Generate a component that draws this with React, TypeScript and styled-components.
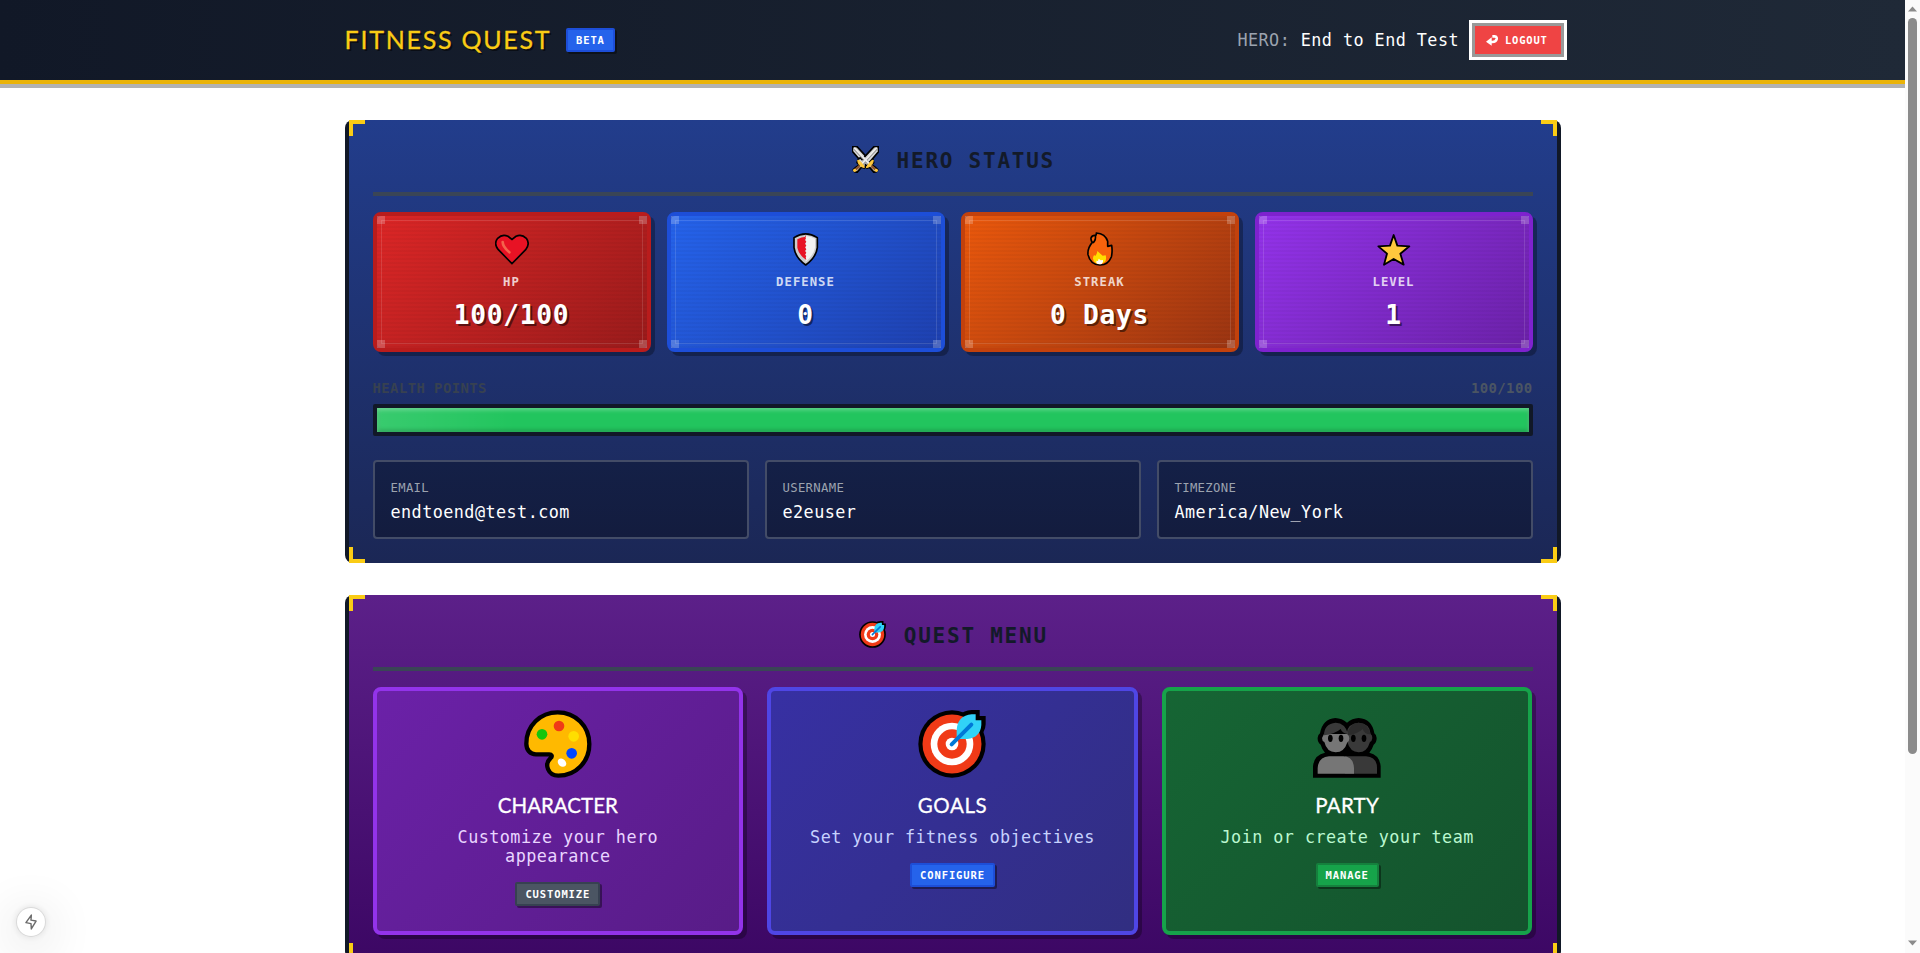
import React from "react";
import styled, { createGlobalStyle, css } from "styled-components";

const GlobalStyle = createGlobalStyle`
  *, *::before, *::after { box-sizing: border-box; }
  body { margin: 0; background: #fff; overflow: hidden; }
  h1, h2, h3, p { margin: 0; }
`;

/* Monospace type with a 0.55em advance and optional tracking. */
const mono = (size: number, tracking = 0) => css`
  font-family: "DejaVu Sans Mono", "Liberation Mono", monospace;
  font-size: ${size * 0.875}px;
  letter-spacing: ${size * 0.0232 + tracking}px;
`;

const Viewport = styled.div`
  display: flex;
  height: 953px;
  overflow: hidden;
`;

const Page = styled.div`
  flex: 1;
  height: 953px;
  overflow: hidden;
`;

const Container = styled.div`
  width: 1216px;
  margin: 0 auto;
`;

const Header = styled.header`
  height: 84px;
  border-bottom: 4px solid #eab308;
  background: linear-gradient(to right, #111827, #1f2937);
  box-shadow: 0 4px 0 rgba(0, 0, 0, 0.3);
`;

const HeaderRow = styled(Container)`
  display: flex;
  align-items: center;
  justify-content: space-between;
  height: 80px;
`;

const Brand = styled.div`
  display: flex;
  align-items: center;
  gap: 16px;
`;

const Logo = styled.h1`
  width: 205.5px;
  padding-bottom: 2px;
  font: 400 25px/32px Lato, sans-serif;
  -webkit-text-stroke: 0.3px #facc15;
  letter-spacing: 1.75px;
  white-space: nowrap;
  color: #facc15;
  text-shadow: 2px 2px 0 rgba(0, 0, 0, 0.5);
`;

const badgeTones = {
  blue: ["#2563eb", "#1d4ed8"],
  gray: ["#4b5563", "#374151"],
  green: ["#16a34a", "#15803d"],
};
type BadgeTone = keyof typeof badgeTones;

const Badge = styled.span<{ $tone: BadgeTone }>`
  display: inline-block;
  height: 24px;
  padding: 0 8px;
  border: 2px solid ${(p) => badgeTones[p.$tone][1]};
  border-radius: 2px;
  background: ${(p) => badgeTones[p.$tone][0]};
  box-shadow: 2px 2px 0 rgba(0, 0, 0, 0.4);
  ${mono(12, 0.6)}
  font-weight: 700;
  line-height: 20px;
  color: #fff;
`;

const Account = styled.div`
  display: flex;
  align-items: center;
  gap: 15.5px;
`;

const HeroName = styled.span`
  ${mono(19.2)}
  line-height: 24px;
  color: #fff;
  white-space: pre;
`;

const Muted = styled.span`
  color: #9ca3af;
`;

const LogoutButton = styled.button`
  display: flex;
  align-items: center;
  gap: 7px;
  width: 86px;
  height: 28px;
  padding: 0 11.5px;
  border: 0;
  background: #ef4444;
  box-shadow: 0 0 0 3px #999, 0 0 0 6px #fff;
  ${mono(12, 0.5)}
  font-weight: 700;
  color: #fff;
`;

const Main = styled(Container)`
  display: flex;
  flex-direction: column;
  gap: 32px;
  padding-top: 36px;
`;

const Panel = styled.section<{ $from: string; $to: string }>`
  position: relative;
  padding: 24px;
  border: solid #111827;
  border-width: 0 4px;
  border-radius: 8px;
  background: linear-gradient(to bottom, ${(p) => p.$from}, ${(p) => p.$to});
`;

const Corner = styled.i<{ $v: "top" | "bottom"; $h: "left" | "right" }>`
  position: absolute;
  ${(p) => p.$v}: 0;
  ${(p) => p.$h}: 0;
  width: 16px;
  height: 16px;
  border: 0 solid #facc15;
  border-${(p) => p.$v}-width: 4px;
  border-${(p) => p.$h}-width: 4px;
`;

const PanelTitle = styled.h2`
  display: flex;
  justify-content: center;
  height: 52px;
  margin-bottom: 16px;
  border-bottom: 4px solid #3a4556;
  ${mono(24, 1.2)}
  font-weight: 700;
  line-height: 35px;
  color: #131a29;
`;

const TitleIcon = styled.span`
  display: flex;
  width: 46.6px;
  padding: 2px 0 0 2px;
`;

const StatGrid = styled.div`
  display: grid;
  grid-template-columns: repeat(4, 1fr);
  gap: 16px;
`;

const StatCard = styled.div<{ $from: string; $to: string; $edge: string }>`
  position: relative;
  display: flex;
  flex-direction: column;
  align-items: center;
  height: 140px;
  padding-top: 16px;
  border: 4px solid ${(p) => p.$edge};
  border-radius: 8px;
  background:
    repeating-linear-gradient(to bottom, transparent 0 2px, rgba(0, 0, 0, 0.03) 2px 4px),
    linear-gradient(135deg, ${(p) => p.$from}, ${(p) => p.$to});
  background-clip: padding-box;
  background-origin: padding-box;
  box-shadow: 4px 4px 0 rgba(0, 0, 0, 0.3);

  &::before {
    content: "";
    position: absolute;
    inset: 4px;
    border: 1px solid rgba(255, 255, 255, 0.13);
  }
`;

const Stud = styled.i<{ $v: "top" | "bottom"; $h: "left" | "right" }>`
  position: absolute;
  ${(p) => p.$v}: 0;
  ${(p) => p.$h}: 0;
  width: 8px;
  height: 8px;
  background: rgba(255, 255, 255, 0.22);
`;

const StatLabel = styled.div`
  margin-top: 6px;
  ${mono(14, 0.7)}
  font-weight: 700;
  line-height: 20px;
  color: rgba(255, 255, 255, 0.8);
`;

const StatValue = styled.div`
  margin-top: 6px;
  ${mono(30)}
  font-weight: 700;
  line-height: 35px;
  color: #fff;
  text-shadow: 2px 2px 0 rgba(0, 0, 0, 0.5);
`;

const BarLabels = styled.div`
  display: flex;
  justify-content: space-between;
  height: 24px;
  margin: 24px 0 4px;
  ${mono(16)}
  font-weight: 700;
  line-height: 24px;
  color: #374151;
`;

const BarCount = styled.span`
  color: #4b5563;
`;

const BarTrack = styled.div`
  height: 32px;
  margin-bottom: 24px;
  border: 4px solid #111827;
  border-radius: 2px;
  background: #1f2937;
`;

const BarFill = styled.div`
  height: 100%;
  background: linear-gradient(to right, rgba(255, 255, 255, 0.1), transparent 12%), #22c55e;
  box-shadow: inset 0 2px 4px rgba(255, 255, 255, 0.3), inset 0 -2px 4px rgba(0, 0, 0, 0.2);
`;

const InfoGrid = styled.div`
  display: grid;
  grid-template-columns: repeat(3, 1fr);
  gap: 16px;
`;

const InfoBox = styled.div`
  height: 79px;
  padding: 17px 16px 0;
  border: 2px solid #434c67;
  border-radius: 4px;
  background: linear-gradient(to bottom, #142047, #131c3e);
`;

const InfoLabel = styled.div`
  ${mono(14)}
  line-height: 19px;
  color: #9ca3af;
`;

const InfoValue = styled.div`
  margin-top: 5px;
  ${mono(19.2)}
  line-height: 19px;
  color: #fff;
`;

const MenuGrid = styled.div`
  display: grid;
  grid-template-columns: repeat(3, 1fr);
  gap: 24px;
`;

const MenuCard = styled.div<{ $from: string; $to: string; $edge: string }>`
  display: flex;
  flex-direction: column;
  align-items: center;
  height: 248px;
  padding: 19px 16px 0;
  border: 4px solid ${(p) => p.$edge};
  border-radius: 8px;
  background: linear-gradient(135deg, ${(p) => p.$from}, ${(p) => p.$to});
  box-shadow: 4px 4px 0 rgba(0, 0, 0, 0.3);
`;

const MenuName = styled.h3<{ $tracking: number }>`
  margin-top: 13px;
  font: 400 20.5px/28px Lato, sans-serif;
  -webkit-text-stroke: 0.3px #fff;
  letter-spacing: ${(p) => p.$tracking}px;
  color: #fff;
`;

const MenuText = styled.p<{ $color: string }>`
  width: 300px;
  margin: 9px 0 16px;
  ${mono(19.2)}
  line-height: 19px;
  text-align: center;
  color: ${(p) => p.$color};
`;

const FloatingButton = styled.div`
  position: fixed;
  left: 17px;
  top: 908px;
  display: flex;
  align-items: center;
  justify-content: center;
  width: 28px;
  height: 28px;
  border-radius: 50%;
  background: #fff;
  box-shadow: 0 0 0 1px rgba(0, 0, 0, 0.08), 0 0 8px rgba(0, 0, 0, 0.14), 0 8px 50px rgba(0, 0, 0, 0.24);
`;

const Scrollbar = styled.div`
  display: flex;
  flex-direction: column;
  align-items: center;
  justify-content: space-between;
  width: 15px;
  height: 953px;
  padding: 6px 0 7px;
  background: #fbfbfb;
`;

const Thumb = styled.div`
  width: 9px;
  height: 736px;
  margin: 6px 0 auto;
  border-radius: 5px;
  background: #8b8b8b;
`;

const Arrow = ({ up }: { up?: boolean }) => (
  <svg width="9" height="6" viewBox="0 0 9 6">
    <path d={up ? "M0 5.5 4.5 0.5 9 5.5Z" : "M0 0.5 4.5 5.5 9 0.5Z"} fill="#8b8b8b" />
  </svg>
);

const Swords = () => (
  <svg width="27" height="27" viewBox="576 78 81 81">
    <g strokeLinejoin="round">
      <path d="M578 80h13l36 39 5-6 6 5 3 10-6 6 13 10 5 5-4 6-7 2-13-15-8 3-22-26-22-25Z" fill="#ddd" stroke="#000" strokeWidth="5" />
      <path d="M655 80h-13l-36 39-5-6-6 5-4 10 7 7-13 9-5 5 4 6 7 2 13-15 9 3 22-26 21-24Z" fill="#ddd" stroke="#000" strokeWidth="5" />
      <path d="m584 86 46 50M649 86l-46 50" stroke="#999" strokeWidth="9" />
      <path d="m583 83 46 50M650 83l-46 50" stroke="#eee" strokeWidth="5" />
      <path d="M593 121q2 20 22 22l-6-9-12-13ZM640 121q-2 20-22 22l6-9 12-13Z" fill="#ffc83d" stroke="#ffc83d" strokeWidth="3" />
      <path d="m599 138-14 12M634 138l14 12" stroke="#8e562e" strokeWidth="7" />
      <circle cx="584" cy="151" r="5" fill="#ffc83d" />
      <circle cx="649" cy="151" r="5" fill="#ffc83d" />
      <path d="M616 131v13" stroke="#000" strokeWidth="4" />
    </g>
  </svg>
);

const Target = ({ size }: { size: number }) => (
  <svg width={size} height={size} viewBox="505 330 204 204">
    <circle cx="607" cy="432" r="101" />
    <path d="M630 345q12-14 36-15h24v18h18v25q-1 20-17 36Z" />
    <circle cx="607" cy="432" r="88.5" fill="#f03a17" />
    <circle cx="607" cy="432" r="64" fill="#fff" />
    <circle cx="607" cy="432" r="44" fill="#f03a17" />
    <circle cx="607" cy="432" r="19" fill="#fff" />
    <path d="M621 417v-28q3-42 45-46h12v18h17v14q-3 38-42 42Z" fill="#31d2f7" />
    <path d="m606 433 59-59" stroke="#0078d7" strokeWidth="12" strokeLinecap="round" />
  </svg>
);

const Heart = () => (
  <svg width="34" height="34" viewBox="464 366 102 102">
    <path d="M515 461 474 419Q459 401 472 385 486 371 503 379L515 388 527 379Q544 371 558 385 570 402 556 419Z" fill="#e81224" stroke="#000" strokeWidth="5" />
    <path d="M487 396q0 14 20 31" fill="none" stroke="#f4634c" strokeWidth="8" strokeLinecap="round" />
  </svg>
);

const Shield = () => (
  <svg width="34" height="34" viewBox="386 336 102 102">
    <path d="M401 353q35-23 70 0v30q-4 30-35 52-31-22-35-52Z" fill="#ccc" stroke="#000" strokeWidth="5" strokeLinejoin="round" />
    <path d="M436 348q15 0 28 8v27q-4 23-28 42Z" fill="#f2f2f2" />
    <path d="M437 350q-14 0-26 8v25q4 22 27 37l-2-8 2-4-4-4 4-6-4-5 4-5-4-6 4-5-4-6 4-6-4-5 3-6-3-4 3-5Z" fill="#e81224" />
  </svg>
);

const Flame = () => (
  <svg width="34" height="34" viewBox="8 306 102 102">
    <path d="M48 309q27 2 34 25v15l12-3q3 19-1 35-10 25-35 24-28-1-35-31-2-20 13-37-5-6-4-13 3-9 14-8 3-3 2-7Z" fill="#f7630c" stroke="#000" strokeWidth="5" strokeLinejoin="round" />
    <path d="M45 316q3 12-7 23" fill="none" stroke="#000" strokeWidth="5" />
    <path d="m51 363 16 14 9-1q4 14-4 21-12 9-26 2-13-10-5-23l5 1q5-6 5-14Z" fill="#ffde00" />
    <path d="m55 386 6 5 7-1q2 8-4 12-10 3-16-3 1-4 0-7l5 1Z" fill="#fff" />
  </svg>
);

const Star = () => (
  <svg width="34" height="34" viewBox="890 306 102 102">
    <path d="m940 315 11 32 36 2-27 22 10 33-30-17-29 17 9-33-26-22 35-2Z" fill="#ffc83d" stroke="#000" strokeWidth="5.5" strokeLinejoin="round" />
  </svg>
);

const Palette = () => (
  <svg width="68" height="68" viewBox="552 375 204 204">
    <path d="M653 382c54 0 95 42 95 95s-40 95-93 95c-31 0-43-34-24-52 8-7 3-12-3-12h-40c-18 0-29-14-29-32 0-54 42-94 94-94Z" fill="#ffb900" stroke="#000" strokeWidth="13" />
    <circle cx="606" cy="448" r="16" fill="#16c60c" />
    <circle cx="657" cy="423" r="16" fill="#f03a17" />
    <circle cx="701" cy="454" r="16" fill="#ffde00" />
    <circle cx="695" cy="505" r="16" fill="#0046ff" />
    <ellipse cx="666" cy="533" rx="14" ry="11" transform="rotate(42 666 533)" fill="#fff" />
  </svg>
);

const People = () => (
  <svg width="68" height="68" viewBox="489 330 204 204">
    <path d="M489 533v-34q3-34 36-41-9-9-13-24-10-7-9-21 1-9 7-13 8-44 46-46 20 1 35 14 15-13 35-14 40 2 47 46 7 5 7 14 0 14-9 20-5 15-13 24 31 7 34 41v34Z" />
    <path d="M590 400q3-30 36-32 34 2 36 34 5 3 5 12-1 9-7 12-9 31-34 31-26-1-34-31ZM585 469h63q33 3 33 34v18h-96Z" fill="#393939" />
    <path d="M594 406v-13q10-25 32-25 30 2 35 35-18 0-23-16-15 15-44 19Z" fill="#2b2b2b" />
    <path d="M522 402h69q7 4 7 13 0 9-6 12-9 30-35 30-27-1-34-31-7-3-7-12ZM503 521v-17q2-32 34-35h43q30 1 32 35v17Z" fill="#767676" />
    <path d="M522 406q0-35 35-38 29 1 37 34-17-1-22-15-17 15-50 19Z" fill="#393939" />
    <g>
      <ellipse cx="541" cy="415" rx="7" ry="11" />
      <ellipse cx="573" cy="415" rx="7" ry="11" />
      <ellipse cx="610" cy="415" rx="7" ry="11" />
      <ellipse cx="642" cy="415" rx="7" ry="11" />
    </g>
  </svg>
);

const ReturnArrow = () => (
  <svg width="12" height="11" viewBox="859 102 36 33">
    <path d="M878 106h7q7 1 6 8-2 9-13 9h-8" fill="none" stroke="#fff" strokeWidth="8" />
    <path d="m859 122 17-13v25Z" fill="#fff" />
  </svg>
);

const Bolt = () => (
  <svg width="12" height="18" viewBox="74 189 38 54">
    <path d="M94 194 77 218l16 3 1 17 15-25-16-3Z" fill="none" stroke="#6b6b6b" strokeWidth="4.5" strokeLinejoin="round" />
  </svg>
);

const Corners = ({ as: Part }: { as: typeof Corner | typeof Stud }) => (
  <>
    <Part $v="top" $h="left" />
    <Part $v="top" $h="right" />
    <Part $v="bottom" $h="left" />
    <Part $v="bottom" $h="right" />
  </>
);

const stats = [
  { label: "HP", value: "100/100", icon: <Heart />, from: "#dc2626", to: "#991b1b", edge: "#b91c1c" },
  { label: "DEFENSE", value: "0", icon: <Shield />, from: "#2563eb", to: "#1e40af", edge: "#1d4ed8" },
  { label: "STREAK", value: "0 Days", icon: <Flame />, from: "#ea580c", to: "#9a3412", edge: "#c2410c" },
  { label: "LEVEL", value: "1", icon: <Star />, from: "#9333ea", to: "#6b21a8", edge: "#7e22ce" },
];

const details = [
  ["EMAIL", "endtoend@test.com"],
  ["USERNAME", "e2euser"],
  ["TIMEZONE", "America/New_York"],
];

const menu: {
  name: string; text: string; action: string; tone: BadgeTone; icon: React.ReactNode;
  from: string; to: string; edge: string; color: string; tracking: number;
}[] = [
  { name: "CHARACTER", text: "Customize your hero appearance", action: "CUSTOMIZE", tone: "gray", icon: <Palette />, from: "#6b21a8", to: "#581c87", edge: "#9333ea", color: "#e9d5ff", tracking: 0 },
  { name: "GOALS", text: "Set your fitness objectives", action: "CONFIGURE", tone: "blue", icon: <Target size={68} />, from: "#3730a3", to: "#312e81", edge: "#4f46e5", color: "#c7d2fe", tracking: 0.6 },
  { name: "PARTY", text: "Join or create your team", action: "MANAGE", tone: "green", icon: <People />, from: "#166534", to: "#14532d", edge: "#16a34a", color: "#bbf7d0", tracking: 0.3 },
];

export default function App() {
  return (
    <>
      <GlobalStyle />
      <Viewport>
        <Page>
          <Header>
            <HeaderRow>
              <Brand>
                <Logo>FITNESS QUEST</Logo>
                <Badge $tone="blue">BETA</Badge>
              </Brand>
              <Account>
                <HeroName><Muted>HERO:</Muted> End to End Test</HeroName>
                <LogoutButton><ReturnArrow />LOGOUT</LogoutButton>
              </Account>
            </HeaderRow>
          </Header>
          <Main>
            <Panel $from="#223d8c" $to="#1b2755">
              <Corners as={Corner} />
              <PanelTitle><TitleIcon><Swords /></TitleIcon>HERO STATUS</PanelTitle>
              <StatGrid>
                {stats.map((s) => (
                  <StatCard key={s.label} $from={s.from} $to={s.to} $edge={s.edge}>
                    <Corners as={Stud} />
                    {s.icon}
                    <StatLabel>{s.label}</StatLabel>
                    <StatValue>{s.value}</StatValue>
                  </StatCard>
                ))}
              </StatGrid>
              <BarLabels><span>HEALTH POINTS</span><BarCount>100/100</BarCount></BarLabels>
              <BarTrack><BarFill /></BarTrack>
              <InfoGrid>
                {details.map(([label, value]) => (
                  <InfoBox key={label}>
                    <InfoLabel>{label}</InfoLabel>
                    <InfoValue>{value}</InfoValue>
                  </InfoBox>
                ))}
              </InfoGrid>
            </Panel>
            <Panel $from="#5c2089" $to="#3c0764">
              <Corners as={Corner} />
              <PanelTitle><TitleIcon><Target size={27} /></TitleIcon>QUEST MENU</PanelTitle>
              <MenuGrid>
                {menu.map((m) => (
                  <MenuCard key={m.name} $from={m.from} $to={m.to} $edge={m.edge}>
                    {m.icon}
                    <MenuName $tracking={m.tracking}>{m.name}</MenuName>
                    <MenuText $color={m.color}>{m.text}</MenuText>
                    <Badge $tone={m.tone}>{m.action}</Badge>
                  </MenuCard>
                ))}
              </MenuGrid>
            </Panel>
          </Main>
        </Page>
        <Scrollbar>
          <Arrow up />
          <Thumb />
          <Arrow />
        </Scrollbar>
      </Viewport>
      <FloatingButton><Bolt /></FloatingButton>
    </>
  );
}
